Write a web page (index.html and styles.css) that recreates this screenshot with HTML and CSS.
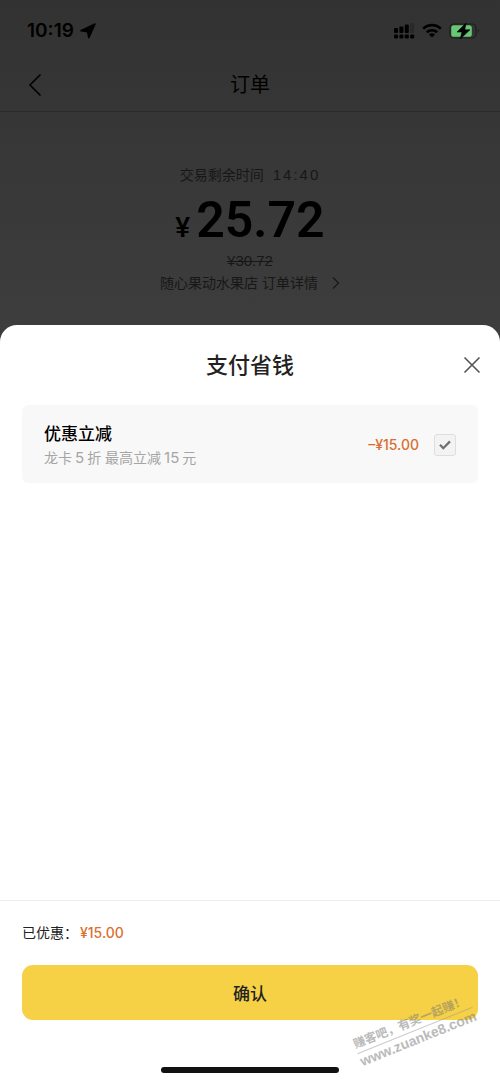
FILE: index.html
```html
<!DOCTYPE html>
<html lang="zh-CN">
<head>
<meta charset="utf-8">
<meta name="viewport" content="width=device-width, initial-scale=1">
<title>支付省钱</title>
<link rel="stylesheet" href="styles.css">
</head>
<body>
<div class="screen">
  <section class="order">
    <div class="status">
      <div class="status-left">
        <span class="time">10:19</span>
        <svg width="16" height="16" viewBox="0 0 16 16"><path d="M15 1 8.8 14.6 7.6 8.6 1 7.6Z" fill="#000" stroke="#000" stroke-width="1.6" stroke-linejoin="round"/></svg>
      </div>
      <div class="status-right">
        <svg width="21" height="16" viewBox="0 0 21 16">
          <g fill="#000"><rect x="0" y="5" width="4" height="5" rx="1"/><rect x="5.4" y="3.4" width="4" height="6.6" rx="1"/><rect x="10.8" y="1.4" width="4" height="8.6" rx="1"/><rect x="0" y="11.4" width="4" height="4" rx="1.2"/><rect x="5.4" y="11.4" width="4" height="4" rx="1.2"/><rect x="10.8" y="11.4" width="4" height="4" rx="1.2"/><rect x="16.2" y="11.4" width="4" height="4" rx="1.2"/></g>
          <rect x="16.2" y="0" width="4" height="10" rx="1" fill="#292929"/>
        </svg>
        <svg width="20" height="16" viewBox="0 0 20 16"><g fill="none" stroke="#000" stroke-width="2.7"><path d="M1.2 5.7a12.6 12.6 0 0 1 17.6 0"/><path d="M4.8 9.3a7.6 7.6 0 0 1 10.4 0"/></g><path d="M10 14.6 6.9 11.6a4.5 4.5 0 0 1 6.2 0Z" fill="#000"/></svg>
        <svg width="31" height="16" viewBox="0 0 31 16">
          <rect x="1" y="1" width="26" height="14" rx="4" fill="none" stroke="#1d1d1d" stroke-width="1.2"/>
          <rect x="2.2" y="2.2" width="20.6" height="11.6" rx="2.6" fill="#67c775"/>
          <path d="M29 6q2 2 0 4Z" fill="#1d1d1d"/>
          <path d="M17 0 8 9h5L11.2 16 21 6.8h-5.2Z" fill="#000" stroke="#000" stroke-width=".6"/>
        </svg>
      </div>
    </div>
    <header class="nav">
      <button class="icon-btn back" type="button" aria-label="返回"><svg width="14" height="24" viewBox="0 0 14 24"><path d="M12.5 1.5 2 12l10.5 10.5" fill="none" stroke="#000" stroke-width="1.6"/></svg></button>
      <h1 class="nav-title">订单</h1>
    </header>
    <div class="summary">
      <p class="remain"><span>交易剩余时间</span><span class="clock">14:40</span></p>
      <p class="price"><span class="currency">¥</span><span class="amount">25.72</span></p>
      <p class="original"><s>¥30.72</s></p>
      <a class="shop" href="#"><span>随心果动水果店 订单详情</span><svg width="8" height="14" viewBox="0 0 8 14"><path d="M1 1.5 6.5 7 1 12.5" fill="none" stroke="#171717" stroke-width="1.1"/></svg></a>
    </div>
  </section>

  <main class="sheet">
    <header class="sheet-head">
      <h2 class="sheet-title">支付省钱</h2>
      <button class="icon-btn close" type="button" aria-label="关闭"><svg width="18" height="18" viewBox="0 0 18 18"><path d="m1.5 1.5 15 15m0-15-15 15" fill="none" stroke="#555" stroke-width="1.6"/></svg></button>
    </header>
    <label class="offer" for="offer">
      <span class="offer-text"><span class="offer-name">优惠立减</span><span class="offer-note">龙卡<span class="num">5</span>折 最高立减<span class="num">15</span>元</span></span>
      <span class="money">–¥15.00</span>
      <span class="tick">
        <input class="tick-box" id="offer" type="checkbox" checked>
        <svg class="tick-mark" width="12" height="10" viewBox="0 0 12 10"><path d="m1 4.8 3.3 3.4L11 1.4" fill="none" stroke="#707070" stroke-width="2.3"/></svg>
      </span>
    </label>
    <footer class="foot">
      <p class="saved"><span>已优惠：</span><span class="money">¥15.00</span></p>
      <button class="confirm" type="button">确认</button>
      <div class="home-bar"></div>
    </footer>
    <div class="mark"><span class="mark-top">赚客吧，有奖一起赚！</span><span class="mark-url">www.zuanke8.com</span></div>
  </main>
</div>
</body>
</html>
```
FILE: styles.css
```css
* { box-sizing: border-box; }
body, h1, h2, p { margin: 0; }
body {
  font-family: Inter, "Noto Sans CJK SC", sans-serif;
  font-size: 14px;
  line-height: 20px;
  color: #222;
}
svg { display: block; }
.screen {
  display: flex;
  flex-direction: column;
  min-height: 100vh;
  overflow: hidden;
  background: #3d3d3d;
}
.order {
  padding-bottom: 32px;
  background: linear-gradient(#323232, #363636 110px, #3d3d3d);
  color: #000;
}
.status {
  display: flex;
  justify-content: space-between;
  align-items: center;
  padding: 21px 20px 0 27px;
}
.status-left, .status-right { display: flex; align-items: center; }
.status-left { gap: 6px; }
.status-right { gap: 7px; }
.time { font-size: 19px; font-weight: 600; }
.nav {
  display: grid;
  grid-template-columns: 44px 1fr 44px;
  align-items: center;
  margin-top: 20px;
  padding: 8px 16px 10px;
  border-bottom: 1px solid #292929;
}
.nav-title {
  font-size: 20px;
  line-height: 32px;
  font-weight: 400;
  text-align: center;
}
.icon-btn {
  display: grid;
  place-items: center;
  padding: 0;
  border: 0;
  background: none;
  cursor: pointer;
}
.back { width: 38px; height: 32px; }
.summary {
  display: flex;
  flex-direction: column;
  align-items: center;
  padding-top: 53px;
  color: #171717;
}
.remain { display: flex; gap: 9px; }
.clock { font-family: "Liberation Sans", sans-serif; font-size: 15px; letter-spacing: 2px; }
.price {
  display: flex;
  align-items: baseline;
  gap: 6px;
  margin-top: 12px;
  color: #000;
  font-family: Roboto, sans-serif;
  line-height: 47px;
}
.currency { font-size: 28px; font-weight: 500; }
.amount { font-size: 50px; font-weight: 600; }
.original { font-family: "Liberation Sans", sans-serif; font-size: 15px; }
.shop {
  display: flex;
  align-items: center;
  gap: 14px;
  margin-top: 2px;
  color: inherit;
  text-decoration: none;
}
.sheet {
  position: relative;
  display: flex;
  flex: 1;
  flex-direction: column;
  border-radius: 17px 17px 0 0;
  background: #fff;
}
.sheet-head {
  display: grid;
  grid-template-columns: 44px 1fr 44px;
  align-items: center;
  padding: 20px 6px;
}
.sheet-title {
  grid-column: 2;
  font-size: 22px;
  line-height: 40px;
  font-weight: 500;
  text-align: center;
}
.close { height: 40px; }
.offer {
  display: flex;
  align-items: center;
  margin: 0 22px;
  padding: 14px 22px 13px;
  border-radius: 6px;
  background: #f8f8f8;
}
.offer-text { display: flex; flex: 1; flex-direction: column; padding-top: 3px; }
.offer-name { font-size: 17px; line-height: 24px; font-weight: 500; color: #000; }
.offer-note { line-height: 24px; color: #a5a5a5; }
.num { margin: 0 3px; font-size: 15px; }
.money { color: #d96f32; font-weight: 500; }
.tick { position: relative; margin-left: 15px; }
.tick-box {
  display: block;
  width: 22px;
  height: 22px;
  margin: 0;
  appearance: none;
  border: 1px solid #dedede;
  border-radius: 3px;
  background: #f3f3f3;
}
.tick-mark { position: absolute; top: 6px; left: 5px; display: none; pointer-events: none; }
.tick-box:checked + .tick-mark { display: block; }
.foot {
  display: flex;
  flex-direction: column;
  margin-top: auto;
  padding: 22px 22px 10px;
  border-top: 1px solid #eee;
}
.saved { display: flex; gap: 2px; }
.confirm {
  margin-top: 22px;
  padding: 15px;
  border: 0;
  border-radius: 11px;
  background: #f6d146;
  color: #222;
  font: 500 17px/25px "Noto Sans CJK SC", sans-serif;
  cursor: pointer;
}
.home-bar {
  align-self: center;
  width: 178px;
  height: 6px;
  margin-top: 47px;
  border-radius: 3px;
  background: #111;
}
.mark {
  position: absolute;
  right: 23px;
  bottom: 35px;
  display: flex;
  flex-direction: column;
  color: #777;
  opacity: .5;
  font-family: "Liberation Sans", "Noto Sans CJK SC", sans-serif;
  font-weight: 700;
  line-height: 17px;
  white-space: nowrap;
  pointer-events: none;
  transform: rotate(-22deg);
}
.mark-top { border-bottom: 1px solid #999; font-size: 12px; }
.mark-url { font-size: 14px; }
```
